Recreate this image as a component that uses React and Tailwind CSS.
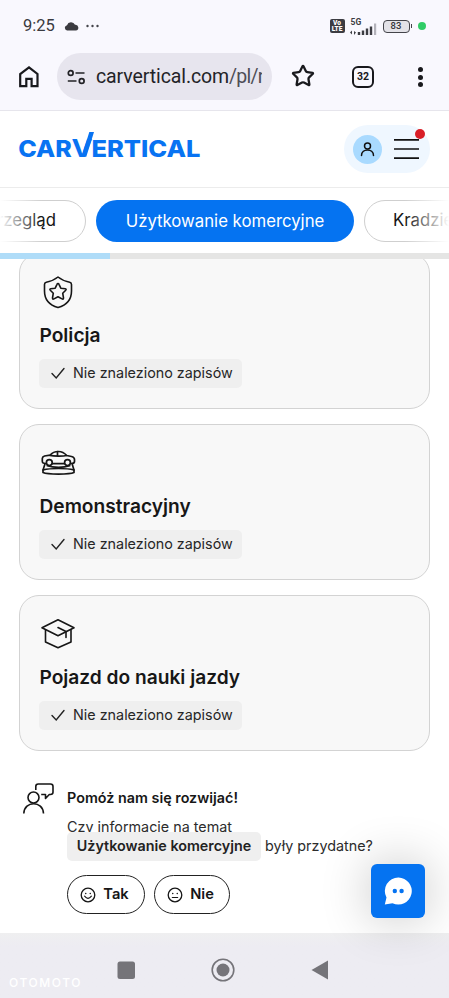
import { Star } from 'lucide-react'

const cards = [
  { title: 'Policja', Icon: ShieldIcon },
  { title: 'Demonstracyjny', Icon: ShowCarIcon },
  { title: 'Pojazd do nauki jazdy', Icon: CapIcon },
]

function ShieldIcon() {
  return (
    <svg className="h-9 w-9 overflow-visible" viewBox="-0.5 0 36 36" fill="none" stroke="#161616" strokeWidth="1.6" strokeLinejoin="round">
      <path d="M18.500 3C15.500 5.500 10.500 7.500 6.800 8.200Q5 8.600 5 10.500V17C5 25.500 9.500 31 18.500 33.500C27.500 31 32 25.500 32 17V10.500Q32 8.600 30.200 8.200C26.500 7.500 21.500 5.500 18.500 3Z" />
      <path d="M18.500 9.600Q19.200 9.600 19.500 10.300L21.300 14.200L25.800 14.700Q27.200 15.100 26.200 16.200L23.200 19.200L24 24Q24 25.600 22.500 24.900L18.500 22.800L14.500 24.900Q13 25.600 13 24L13.800 19.200L10.800 16.200Q9.800 15.100 11.200 14.700L15.700 14.200L17.500 10.300Q17.800 9.600 18.500 9.600Z" />
    </svg>
  )
}

function ShowCarIcon() {
  return (
    <svg className="h-9 w-9 overflow-visible" viewBox="-0.5 1 36 36" fill="none" stroke="#161616" strokeWidth="1.7" strokeLinecap="round" strokeLinejoin="round">
      <path d="M6.300 19.500C3.300 19.500 2.800 18.800 2.800 17V14.500C2.800 12.800 3.500 12.500 5 12L10.500 11.200C13 8.200 15.500 7.500 19 7.500C22.500 7.500 24.800 8.800 27.200 11.500L32 12.500C34 13 35 13.800 35 15.500V17.500C35 19 34 19.500 31.800 19.500" />
      <path d="M10.500 11.400C14 12.200 23 12.500 27.200 11.500M18 7.700V12M13.300 19.700H24.300" />
      <circle cx="9.800" cy="18.600" r="2.900" />
      <circle cx="28" cy="18.600" r="2.900" />
      <path d="M5.300 20.500L3.500 26C11 24 27 24 34.500 26L32.800 20.500M7.800 21.800C14 23.800 24 23.800 30.200 21.800" />
      <path d="M3.500 26V28.500C8 30.600 30 30.600 34.500 28.500V26" />
    </svg>
  )
}

function CapIcon() {
  return (
    <svg className="h-9 w-9 overflow-visible" viewBox="-0.5 1 36 36" fill="none" stroke="#161616" strokeWidth="1.6" strokeLinecap="round" strokeLinejoin="round">
      <path d="M18.500 4.800L34.500 12.800L18.500 20.800L2.500 12.800Z" />
      <path d="M6 15V27L18.500 32.800L31.500 27V14.800" />
      <path d="M18.500 12.500L26.500 16.500V22.500" />
    </svg>
  )
}

function CheckIcon() {
  return (
    <svg className="h-3.5 w-3.5 shrink-0" viewBox="0 0 14 14" fill="none" stroke="#222" strokeWidth="1.4" strokeLinecap="round">
      <path d="M1 7.500L5.200 12L13 2.500" />
    </svg>
  )
}

function FaceIcon({ smile }) {
  return (
    <svg className="h-4 w-4" viewBox="0 0 16 16" fill="none" stroke="#161616" strokeWidth="1.300" strokeLinecap="round">
      <circle cx="8" cy="8" r="6.800" />
      {smile ? <path d="M4.600 9.200Q8 13.500 11.400 9.200" strokeWidth="1.1" /> : <path d="M5.300 10.500H10.700" strokeWidth="1.1" />}
      <path d="M5.700 6.500H5.800M10.200 6.500H10.300" strokeWidth="1.400" />
    </svg>
  )
}

function StatusBar() {
  return (
    <div className="flex h-[52px] items-center pr-[23px] pl-[23px]">
      <span className="w-[33px] font-[Roboto] text-[16.500px] leading-5 whitespace-nowrap text-[#3a3a40]">9:25</span>
      <svg className="ml-2 h-[10px] w-[15px]" viewBox="0 0 15 10" fill="#3b3b40">
        <path d="M3 9.500A2.700 2.700 0 0 1 3 4.200A4.300 4.300 0 0 1 11 3.700A2.900 2.900 0 0 1 11.800 9.500Z" />
      </svg>
      <svg className="ml-[7px] h-1 w-[14px]" viewBox="0 0 14 4" fill="#44444a">
        <circle cx="1.500" cy="2" r="1.200" />
        <circle cx="6.500" cy="2" r="1.200" />
        <circle cx="11.500" cy="2" r="1.200" />
      </svg>
      <div className="ml-auto flex items-center">
        <div className="flex h-[14px] w-[15px] flex-col items-center justify-center rounded-[2px] bg-[#3c3c42] font-[Roboto] text-[6.500px] leading-[6px] font-black text-white">
          <span>Vo</span>
          <span>LTE</span>
        </div>
        <div className="ml-[5px] flex h-[17px] w-[27px] flex-col">
          <span className="h-[9px] pl-[1px] font-[Roboto] text-[8.500px] leading-[9px] font-bold text-[#3c3c42]">5G</span>
          <svg className="-mt-[4px] h-[12px] w-[27px] shrink-0" viewBox="0 0 27 12" fill="#3c3c42">
            <path d="M2 7.500V11.500L0 9.500ZM4 12V8L6 9.500ZM7.800 9H10.200V12H7.800ZM11.800 7.500H14.200V12H11.800ZM15.800 5.500H18.200V12H15.800ZM19.800 3.500H22.200V12H19.800Z" />
            <path d="M24 0.500H26.200V12H24Z" fill="#b3b2ba" />
          </svg>
        </div>
        <div className="ml-[6px] flex h-[13px] w-[27px] items-center justify-center rounded-[4px] border-[1.500px] border-[#44444a] bg-[#e3e2e8] font-[Roboto] text-[9.500px] leading-none font-medium text-[#333338]">83</div>
        <span className="ml-px h-[4px] w-[1.500px] bg-[#44444a]" />
        <span className="ml-[6px] h-2 w-2 rounded-full bg-[#30cc66]" />
      </div>
    </div>
  )
}

function BrowserBar() {
  return (
    <div className="flex h-[59px] items-start border-b border-[#e6e5ec] pt-px pr-[26px] pl-[18px]">
      <svg className="mt-3 h-6 w-[22px]" viewBox="0 0 22 24" fill="none" stroke="#19191d" strokeWidth="2.200">
        <path d="M2.200 21.200V9L11 2.300L19.500 9V21.200H13.600V13.800H8.300V21.200Z" />
      </svg>
      <div className="ml-[17px] flex h-[47px] w-[215px] items-center rounded-full bg-[#e7e5ee] pl-[10px]">
        <svg className="h-[18px] w-[19px] shrink-0" viewBox="0 0 19 18" fill="none" stroke="#222226" strokeWidth="1.700">
          <circle cx="3.700" cy="5" r="2.400" />
          <path d="M8.500 5H17.500M0.800 13H9.500" />
          <circle cx="14.700" cy="13" r="2.400" />
        </svg>
        <span className="ml-[9px] w-[167px] overflow-hidden pt-px pl-px font-[Roboto] text-[19.500px] leading-7 tracking-[-0.100px] whitespace-nowrap text-[#232327]">
          carvertical.com<span className="tracking-[-0.800px] text-[#4e4e56]">/pl/r</span>
        </span>
      </div>
      <Star className="mt-[11px] ml-[19px] h-6 w-6 text-[#19191d]" strokeWidth={2.3} strokeLinejoin="miter" />
      <div className="mt-[13px] ml-[37px] flex h-[22px] w-[22px] items-center justify-center rounded-[6px] border-2 border-[#19191d] font-[Roboto] text-[10.500px] font-bold text-[#19191d]">32</div>
      <div className="mt-[14px] ml-auto flex h-5 flex-col justify-between">
        <i className="h-[5px] w-[5px] rounded-full bg-[#19191d]" />
        <i className="h-[5px] w-[5px] rounded-full bg-[#19191d]" />
        <i className="h-[5px] w-[5px] rounded-full bg-[#19191d]" />
      </div>
    </div>
  )
}

function Logo() {
  return (
    <svg className="h-[34px] w-[184px] overflow-visible" viewBox="0 0 184 34" fill="#0873f2" fontFamily="Inter, sans-serif" fontWeight="800" fontSize="23.6">
      <text x="-0.700" y="24.700" textLength="53.500" lengthAdjust="spacingAndGlyphs">CAR</text>
      <text x="52.500" y="24.700" fontWeight="700" textLength="21" lengthAdjust="spacingAndGlyphs">V</text>
      <text x="72.500" y="24.700" textLength="109" lengthAdjust="spacingAndGlyphs">ERTICAL</text>
      {/* raised arm of the V */}
      <path d="M62.500 24.700L70.300 0H75L67.300 24.700Z" />
    </svg>
  )
}

function Header() {
  return (
    <header className="flex h-[77px] items-center justify-between border-b border-[#ececec] pr-[19px] pl-[19px]">
      <Logo />
      <div className="relative flex h-12 w-[86px] items-center rounded-full bg-[#eff7ff] pl-[9px]">
        <div className="flex h-[29px] w-[29px] items-center justify-center rounded-full bg-[#a9daff]">
          <svg className="h-[15px] w-[15px]" viewBox="0 0 15 15" fill="none" stroke="#111" strokeWidth="1.500" strokeLinecap="round">
            <circle cx="7.500" cy="4" r="3" />
            <path d="M1.500 13.500C1.500 6 13.500 6 13.500 13.500" />
          </svg>
        </div>
        <svg className="ml-3 h-5 w-[25px]" viewBox="0 0 25 20" stroke="#111" strokeWidth="1.700">
          <path d="M0 0.900H25M0 10H25M0 19.100H25" />
        </svg>
        <span className="absolute top-[4px] right-[5px] h-[10px] w-[10px] rounded-full bg-[#d91f28]" />
      </div>
    </header>
  )
}

function Tabs() {
  return (
    <div className="relative h-[65px] overflow-hidden pt-3">
      <div className="-ml-[38px] flex w-[560px] gap-[10px] text-[16.750px] text-[#161616]">
        <div className="flex h-[42px] w-[124px] shrink-0 items-center justify-end rounded-full border border-[#cfcfcf] pr-[29px]">Przegląd</div>
        <div className="flex h-[42px] w-[258px] shrink-0 items-center justify-center rounded-full bg-[#0573f1] pt-px text-white">Użytkowanie komercyjne</div>
        <div className="flex h-[42px] w-[130px] shrink-0 items-center rounded-full border border-[#cfcfcf] pl-[28px]">Kradzież</div>
      </div>
      <div className="absolute top-0 left-0 h-full w-[42px] bg-linear-to-r from-white to-transparent" />
      <div className="absolute top-0 right-0 h-full w-[44px] bg-linear-to-l from-white to-transparent" />
    </div>
  )
}

function Card({ title, Icon }) {
  return (
    <section className="flex h-[156px] shrink-0 flex-col items-start rounded-[20px] border border-[#d3d3d3] bg-[#f8f8f8] pt-5 pl-[19px]">
      <Icon />
      <h2 className="mt-[13px] pl-[0.500px] text-[19.150px] leading-6 font-semibold text-[#171717]">{title}</h2>
      <div className="mt-3 flex h-[29px] w-[203px] items-center gap-2 rounded-[5px] bg-[#efefef] pb-px pl-3 text-[14.350px] whitespace-nowrap text-[#262626]">
        <CheckIcon />
        Nie znaleziono zapisów
      </div>
    </section>
  )
}

function Feedback() {
  return (
    <section className="mt-[31px] flex pl-[23px]">
      <svg className="h-8 w-8 shrink-0" viewBox="0 0 32 32" fill="none" stroke="#161616" strokeWidth="1.600" strokeLinejoin="round">
        <circle cx="10.500" cy="15.500" r="5.500" />
        <path d="M0.800 31.500C1.300 18.500 20 18.500 20.500 31.500" />
        <path d="M12.800 8V4.500Q12.800 2 15.300 2H27.500Q30 2 30 4.500V10.300Q30 12.500 27.500 12.500H26.300L22.500 16.500V12.500H18.200" />
      </svg>
      <div className="ml-3 w-[340px] text-[14.350px] text-[#2c2c2c]">
        <h3 className="mt-[6px] text-[14.350px] leading-5 font-semibold text-[#171717]">Pomóż nam się rozwijać!</h3>
        <p className="mt-[9px] h-[15px] leading-5">Czy informacje na temat</p>
        <div className="relative flex items-center">
          <span className="mr-1 flex h-[29px] w-[194px] items-center justify-center rounded-[5px] bg-[#efefef] pb-px font-semibold whitespace-nowrap text-[#222]">Użytkowanie komercyjne</span>
          <span className="pb-px">były przydatne?</span>
        </div>
        <div className="mt-[14px] flex gap-[9px] text-[14.700px] font-semibold text-[#161616]">
          <button className="flex h-[39px] w-[78px] items-center justify-center gap-[7px] rounded-full border-[1.500px] border-[#222] bg-white pr-[3px]">
            <FaceIcon smile />
            Tak
          </button>
          <button className="flex h-[39px] w-[76px] items-center justify-center gap-[7px] rounded-full border-[1.500px] border-[#222] bg-white pr-[3px]">
            <FaceIcon />
            Nie
          </button>
        </div>
      </div>
    </section>
  )
}

function SystemNav() {
  return (
    <nav className="relative flex h-[65px] justify-center gap-[77px] bg-linear-to-b from-[#efeff0] to-[#edecf2] to-20% pt-[25px] pr-[3px]">
      <svg className="h-6 w-6" viewBox="0 0 24 24"><rect x="3.500" y="3.500" width="17.500" height="17.500" rx="2.500" fill="#757479" /></svg>
      <svg className="-ml-1 h-6 w-6" viewBox="0 0 24 24" fill="none">
        <circle cx="12" cy="12" r="10.800" stroke="#757479" strokeWidth="1.600" />
        <circle cx="12" cy="12" r="6.500" fill="#757479" />
      </svg>
      <svg className="-ml-1 h-6 w-6" viewBox="0 0 24 24"><path d="M3.500 12L20 2.500V21.500Z" fill="#757479" /></svg>
      <span className="absolute top-[43px] left-[9px] text-[12px] leading-[14px] font-medium tracking-[1.600px] text-white">OTOMOTO</span>
    </nav>
  )
}

export default function App() {
  return (
    <div className="relative flex h-[998px] w-full flex-col overflow-hidden bg-white font-[Inter,sans-serif]">
      <div className="shrink-0 bg-[#f9f8fe]">
        <StatusBar />
        <BrowserBar />
      </div>
      <div className="relative z-10 shrink-0 bg-white">
        <Header />
        <Tabs />
        <div className="h-[6px] bg-[#e5e5e4]">
          <div className="h-full w-[110px] bg-[#afdcf8]" />
        </div>
      </div>
      <main className="min-h-0 flex-1">
        <div className="-mt-[6px] flex flex-col gap-[15px] px-[19px]">
          {cards.map(card => (
            <Card key={card.title} {...card} />
          ))}
        </div>
        <Feedback />
      </main>
      <SystemNav />

      {/* Chat launcher */}
      <button className="absolute top-[864px] left-[371px] flex h-[54px] w-[54px] items-center justify-center rounded-[6px] bg-[#0573f1] shadow-[0_0_50px_rgba(0,0,0,0.24)]" aria-label="Chat">
        <svg className="h-7 w-7" viewBox="0 0 28 28">
          <path d="M14.500 0.500A13.500 13.500 0 1 1 8.500 26.200L0.800 27.500L2.500 20.500A13.500 13.500 0 0 1 14.500 0.500Z" fill="#fff" />
          <circle cx="10.800" cy="14" r="2.200" fill="#0573f1" />
          <circle cx="17.600" cy="14" r="2.200" fill="#0573f1" />
        </svg>
      </button>
    </div>
  )
}
